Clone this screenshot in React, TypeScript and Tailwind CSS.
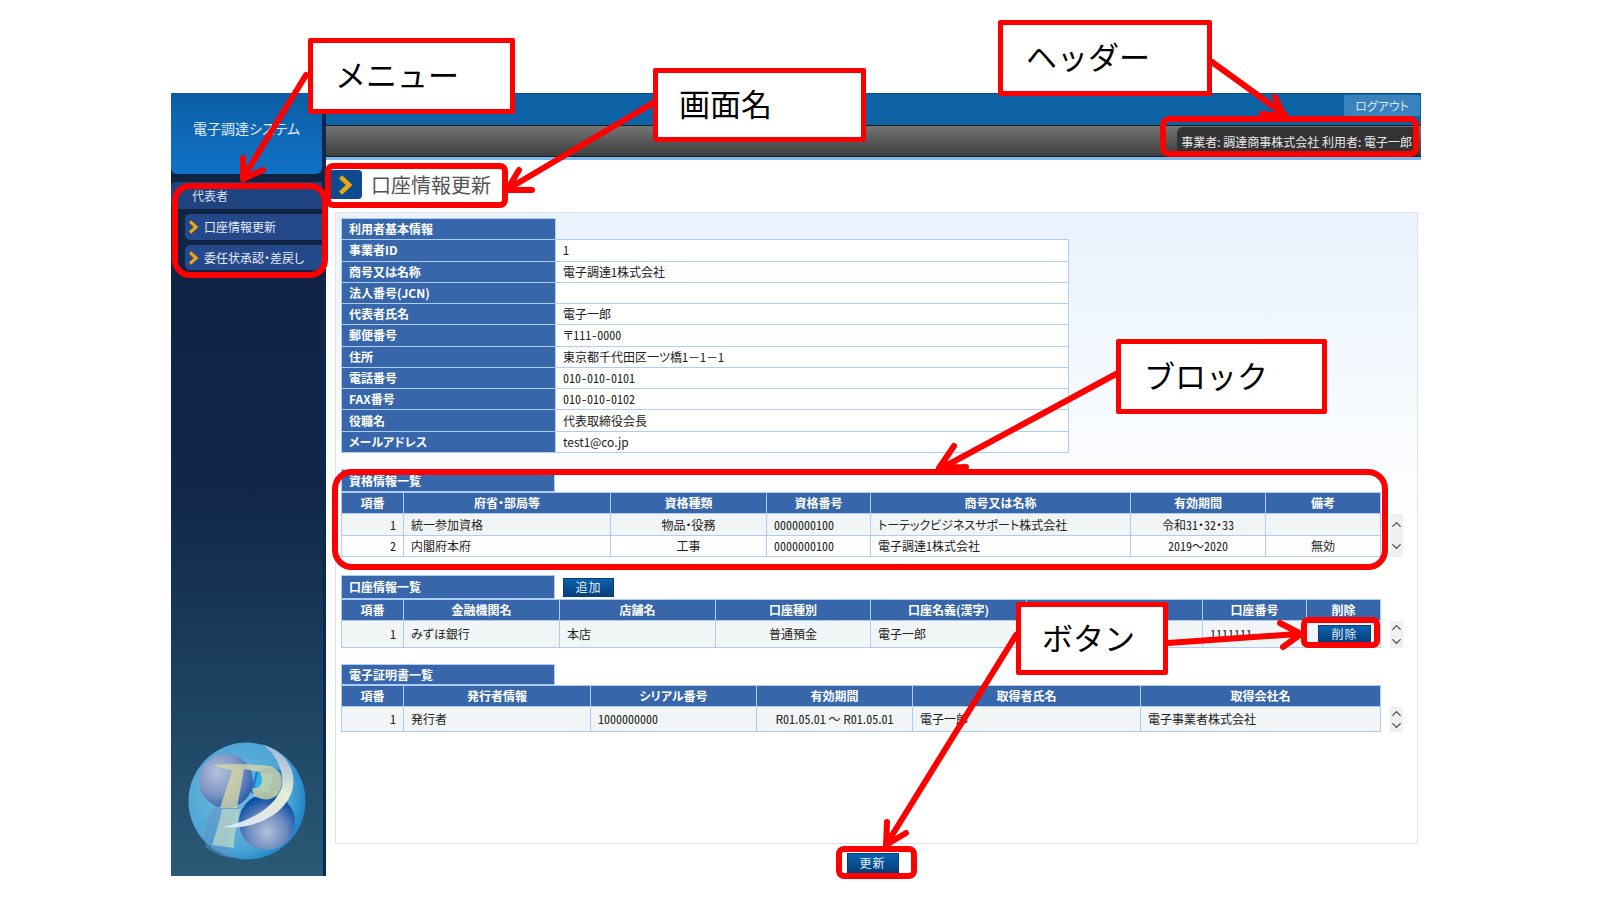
import { ChevronDown, ChevronUp } from "lucide-react";
import type { ReactNode } from "react";

const HEAD = "bg-[#3767aa] text-white font-bold";
const LINE = "border border-[#aecdf6]";

// half-width digits, like the bitmap gothic in the original system
function T({ s }: { s: string }) {
  return (
    <>
      {s.split(/([0-9-]+)/).map((part, i) =>
        i % 2 === 1 ? (
          <span key={i} className="[font-feature-settings:'hwid']">
            {part}
          </span>
        ) : (
          part
        ),
      )}
    </>
  );
}

type Col = { label: string; width: number; align?: "left" | "center" | "right" };

function cellAlign(align?: string) {
  if (align === "center") return "text-center";
  if (align === "right") return "text-right pr-[7px]";
  return "text-left pl-[7px]";
}

function ListTable({
  cols,
  rows,
  headH,
  rowHs,
}: {
  cols: Col[];
  rows: ReactNode[][];
  headH: string;
  rowHs: string[];
}) {
  return (
    <table className="table-fixed border-collapse w-[1039px] text-[12px] leading-none text-[#222]">
      <colgroup>
        {cols.map((c, i) => (
          <col key={i} style={{ width: c.width }} />
        ))}
      </colgroup>
      <thead>
        <tr className={headH}>
          {cols.map((c, i) => (
            <th key={i} className={`${HEAD} ${LINE} text-center`}>
              {c.label}
            </th>
          ))}
        </tr>
      </thead>
      <tbody>
        {rows.map((r, i) => (
          <tr key={i} className={`${rowHs[i]} ${i % 2 === 0 ? "bg-[#f1f5f5]" : "bg-white"}`}>
            {r.map((v, j) => (
              <td key={j} className={`${LINE} ${cellAlign(cols[j].align)}`}>
                {typeof v === "string" ? <T s={v} /> : v}
              </td>
            ))}
          </tr>
        ))}
      </tbody>
    </table>
  );
}

function SectionHead({ children, h }: { children: ReactNode; h: string }) {
  return (
    <div className={`${HEAD} ${LINE} ${h} w-[214px] pl-[7px] flex items-center text-[12px] leading-none`}>
      {children}
    </div>
  );
}

function Scroller({ h }: { h: string }) {
  return (
    <div className={`${h} w-[13px] ml-[9px] bg-[#f0f0f0] flex flex-col items-center justify-around text-[#4a4a4a]`}>
      <ChevronUp size={15} strokeWidth={2} className="-my-[2px]" />
      <ChevronDown size={15} strokeWidth={2} className="-my-[2px]" />
    </div>
  );
}

function BlueButton({ label, className }: { label: string; className: string }) {
  return (
    <button
      className={`${className} bg-gradient-to-b from-[#0b62ac] to-[#073f7c] border border-[#0a3c75] text-[#e4eefa] text-[12px] leading-none tracking-[1px] flex items-center justify-center`}
    >
      {label}
    </button>
  );
}

function Chevron({ className }: { className: string }) {
  return (
    <svg viewBox="0 0 12 16" className={className}>
      <path d="M2 1.5 L9 8 L2 14.5" fill="none" stroke="#eba70f" strokeWidth="3.6" />
    </svg>
  );
}

function Logo() {
  return (
    <svg viewBox="0 0 118 118" className="w-[118px] h-[118px]">
      <defs>
        <radialGradient id="globe" cx="40%" cy="45%" r="65%">
          <stop offset="0%" stopColor="#78bcdc" />
          <stop offset="72%" stopColor="#4da4d6" />
          <stop offset="100%" stopColor="#0f7cc4" />
        </radialGradient>
        <radialGradient id="ball" cx="35%" cy="35%" r="75%">
          <stop offset="0%" stopColor="#b4c2da" />
          <stop offset="55%" stopColor="#7d93c2" />
          <stop offset="100%" stopColor="#1d55a8" />
        </radialGradient>
        <radialGradient id="ballB" cx="50%" cy="68%" r="62%">
          <stop offset="0%" stopColor="#b5c1da" />
          <stop offset="55%" stopColor="#6e8ac0" />
          <stop offset="100%" stopColor="#0a4ea4" />
        </radialGradient>
        <linearGradient id="moon" x1="0.7" y1="0" x2="0.3" y2="1">
          <stop offset="0%" stopColor="#a9b8dc" />
          <stop offset="45%" stopColor="#f4f6d6" />
          <stop offset="100%" stopColor="#e4ecf8" />
        </linearGradient>
      </defs>
      <circle cx="59" cy="59" r="58.5" fill="url(#globe)" />
      <path d="M30 62 C18 72 14 92 18 106 C28 112 36 115 42 116 C40 96 42 78 52 66 Z" fill="#5f8fc8" opacity="0.5" />
      <circle cx="38" cy="39" r="27" fill="url(#ball)" />
      <circle cx="79" cy="80" r="28" fill="url(#ballB)" />
      <path d="M82 25 L100 30 L94 52 L72 56 L62 50 L68 30 Z" fill="#0f5fb4" opacity="0.7" />
      <path d="M70 30 L86 32 L80 50 L66 48 Z" fill="#2fb0ec" />
      <path d="M25 23 C42 22 68 22 82 24 C94 28 96 38 92 48 C88 58 78 60 66 54 L64 46 C74 48 76 38 72 30 L56 27 L49 66 L32 66 L44 29 C38 26 30 26 25 23 Z" fill="#d8d8a6" opacity="0.78" />
      <path d="M34 67 L52 67 C50 80 46 92 46 106 L24 103 C28 90 32 78 34 67 Z" fill="#cfe6c4" opacity="0.6" />
      <path d="M75 3 C95 8 108 25 105 45 C100 70 70 88 35 85 C60 80 88 66 94 44 C96 28 88 12 75 3 Z" fill="url(#moon)" opacity="0.92" />
    </svg>
  );
}

function Callout({ label, className, textPad }: { label: string; className: string; textPad: string }) {
  return (
    <div
      className={`absolute ${className} ${textPad} pb-[5px] bg-white border-[5px] border-[#ff0000] rounded-[2px] flex items-center text-[31px] leading-none text-black [font-feature-settings:normal]`}
    >
      {label}
    </div>
  );
}

function Ring({ className }: { className: string }) {
  return <div className={`absolute ${className} border-[6px] border-[#ff0000] pointer-events-none`} />;
}

const arrows = [
  "M306 75 L243 178 M243 158 L243 179 L263 170",
  "M653 103 L508 189 M519 170 L507 190 L532 190",
  "M1212 62 L1285 115 M1275 97 L1284 116 L1262 114",
  "M1116 374 L940 469 M954 446 L939 468 L966 467",
  "M1168 643 L1298 634 M1280 623 L1301 634 L1283 647",
  "M1016 635 L886 845 M887 822 L886 845 L906 833",
];

const basicInfo = [
  ["事業者ID", "1"],
  ["商号又は名称", "電子調達1株式会社"],
  ["法人番号(JCN)", ""],
  ["代表者氏名", "電子一郎"],
  ["郵便番号", "〒111-0000"],
  ["住所", "東京都千代田区一ツ橋1－1－1"],
  ["電話番号", "010-010-0101"],
  ["FAX番号", "010-010-0102"],
  ["役職名", "代表取締役会長"],
  ["メールアドレス", "test1@co.jp"],
];

export default function App() {
  return (
    <div className="relative w-[1600px] h-[900px] bg-white overflow-hidden pl-[171px] pt-[93px] font-['Noto_Sans_CJK_JP',sans-serif] [font-feature-settings:'palt']">
      <div className="flex w-[1250px] h-[783px]">
        {/* Sidebar */}
        <aside className="w-[155px] shrink-0 flex flex-col bg-gradient-to-b from-[#0f2240] via-[#10264a] to-[#2a5a76] border-r-[3px] border-[#0b2a50]">
          <div className="h-[81px] w-[151px] bg-gradient-to-b from-[#0c5ea6] to-[#1072c6] rounded-b-[6px] pt-[26px] text-center text-[14px] leading-[18px] text-[#e2ecf6]">
            電子調達システム
          </div>
          <div className="mt-[8px] h-[27px] w-[151px] bg-[#20447f] rounded-l-[5px] flex items-center pl-[21px] text-[12px] leading-none text-[#d5e0ee]">
            代表者
          </div>
          <div className="mt-[5px] ml-[14px] w-[137px] h-[26px] bg-[#24488a] rounded-l-[5px] flex items-center pl-[3px] text-[12px] leading-none text-[#e4ebf5]">
            <Chevron className="w-[11px] h-[14px] mr-[5px]" />
            口座情報更新
          </div>
          <div className="mt-[5px] ml-[14px] w-[137px] h-[25px] bg-[#24488a] rounded-l-[5px] flex items-center pl-[3px] text-[12px] leading-none text-[#e4ebf5]">
            <Chevron className="w-[11px] h-[14px] mr-[5px]" />
            委任状承認・差戻し
          </div>
          <div className="mt-auto pb-[16px] pl-[17px]">
            <Logo />
          </div>
        </aside>

        {/* Main column */}
        <main className="flex-1 min-w-0 flex flex-col">
          <header className="h-[67px] shrink-0">
            <div className="h-[32px] bg-[#0e62a6] border-t border-[#0a4c8a] flex justify-end items-start pt-[1px] pr-[1px]">
              <div className="w-[76px] h-[21px] bg-[#3a82bc] rounded-[2px] flex items-center justify-center text-[12px] leading-none text-[#d6e6f4]">
                ログアウト
              </div>
            </div>
            <div className="h-[32px] bg-gradient-to-b from-[#757575] to-[#3e3e3e] border-y border-[#1d1d1d] flex justify-end items-end pr-[2px]">
              <div className="w-[242px] h-[29px] bg-[#333] rounded-tl-[6px] flex items-center justify-end pr-[7px] text-[12px] leading-none text-[#e8e8e8] whitespace-nowrap">
                事業者:&nbsp;調達商事株式会社&nbsp;利用者:&nbsp;電子一郎
              </div>
            </div>
            <div className="h-[3px] bg-[#7ab8f0]" />
          </header>

          <div className="mt-[10px] ml-[3px] h-[29px] flex items-center shrink-0">
            <div className="w-[33px] h-[29px] bg-[#0d4a90] rounded-[4px] flex items-center justify-center">
              <Chevron className="w-[15px] h-[20px]" />
            </div>
            <span className="ml-[9px] text-[20px] leading-none text-[#555]">口座情報更新</span>
          </div>

          <section className="mt-[13px] ml-[9px] mr-[3px] h-[632px] shrink-0 border border-[#e3e3e3] bg-gradient-to-b from-[#e9f2fd] via-white to-white pl-[5px] pt-[5px] flex flex-col">
            {/* 利用者基本情報 */}
            <table className="table-fixed border-collapse w-[728px] h-[235px] text-[12px] leading-none text-[#222]">
              <colgroup>
                <col className="w-[214px]" />
                <col />
              </colgroup>
              <tbody>
                <tr>
                  <th className={`${HEAD} ${LINE} text-left pl-[7px]`}>利用者基本情報</th>
                </tr>
                {basicInfo.map(([k, v]) => (
                  <tr key={k}>
                    <th className={`${HEAD} ${LINE} text-left pl-[7px]`}>
                      <T s={k} />
                    </th>
                    <td className={`${LINE} bg-white pl-[7px]`}>
                      <T s={v} />
                    </td>
                  </tr>
                ))}
              </tbody>
            </table>

            {/* 資格情報一覧 */}
            <div className="mt-[16px]">
              <SectionHead h="h-[23px]">資格情報一覧</SectionHead>
              <div className="flex items-end">
                <ListTable
                  headH="h-[21px]"
                  rowHs={["h-[22px]", "h-[21px]"]}
                  cols={[
                    { label: "項番", width: 62, align: "right" },
                    { label: "府省・部局等", width: 207 },
                    { label: "資格種類", width: 156, align: "center" },
                    { label: "資格番号", width: 104 },
                    { label: "商号又は名称", width: 260 },
                    { label: "有効期間", width: 135, align: "center" },
                    { label: "備考", width: 115, align: "center" },
                  ]}
                  rows={[
                    ["1", "統一参加資格", "物品・役務", "0000000100", "トーテックビジネスサポート株式会社", "令和31・32・33", ""],
                    ["2", "内閣府本府", "工事", "0000000100", "電子調達1株式会社", "2019～2020", "無効"],
                  ]}
                />
                <Scroller h="h-[43px]" />
              </div>
            </div>

            {/* 口座情報一覧 */}
            <div className="mt-[18px]">
              <div className="flex items-center">
                <SectionHead h="h-[24px]">口座情報一覧</SectionHead>
                <BlueButton label="追加" className="ml-[8px] w-[51px] h-[19px]" />
              </div>
              <div className="flex items-end">
                <ListTable
                  headH="h-[21px]"
                  rowHs={["h-[27px]"]}
                  cols={[
                    { label: "項番", width: 62, align: "right" },
                    { label: "金融機関名", width: 156 },
                    { label: "店舗名", width: 156 },
                    { label: "口座種別", width: 155, align: "center" },
                    { label: "口座名義(漢字)", width: 156 },
                    { label: "", width: 176 },
                    { label: "口座番号", width: 104 },
                    { label: "削除", width: 74, align: "center" },
                  ]}
                  rows={[
                    [
                      "1",
                      "みずほ銀行",
                      "本店",
                      "普通預金",
                      "電子一郎",
                      "",
                      "1111111",
                      <div key="del" className="flex justify-end pr-[9px]">
                        <BlueButton label="削除" className="w-[53px] h-[18px]" />
                      </div>,
                    ],
                  ]}
                />
                <Scroller h="h-[27px]" />
              </div>
            </div>

            {/* 電子証明書一覧 */}
            <div className="mt-[16px]">
              <SectionHead h="h-[21px]">電子証明書一覧</SectionHead>
              <div className="flex items-end">
                <ListTable
                  headH="h-[21px]"
                  rowHs={["h-[25px]"]}
                  cols={[
                    { label: "項番", width: 62, align: "right" },
                    { label: "発行者情報", width: 187 },
                    { label: "シリアル番号", width: 166 },
                    { label: "有効期間", width: 156, align: "center" },
                    { label: "取得者氏名", width: 228 },
                    { label: "取得会社名", width: 240 },
                  ]}
                  rows={[["1", "発行者", "1000000000", "R01.05.01 ～ R01.05.01", "電子一郎", "電子事業者株式会社"]]}
                />
                <Scroller h="h-[25px]" />
              </div>
            </div>
          </section>

          <div className="mt-[9px] flex justify-center pl-[10px]">
            <div className="w-[64px]">
              <BlueButton label="更新" className="w-[52px] h-[20px]" />
            </div>
          </div>
        </main>
      </div>

      {/* Annotations over the screenshot */}
      <svg viewBox="0 0 1600 900" className="absolute inset-0 w-[1600px] h-[900px] pointer-events-none">
        {arrows.map((d) => (
          <path key={d} d={d} fill="none" stroke="#ff0000" strokeWidth="6" strokeLinecap="round" strokeLinejoin="round" />
        ))}
      </svg>
      <Ring className="left-[172px] top-[183px] w-[156px] h-[95px] rounded-[18px]" />
      <Ring className="left-[325px] top-[163px] w-[183px] h-[45px] rounded-[8px]" />
      <Ring className="left-[1160px] top-[116px] w-[259px] h-[41px] rounded-[9px]" />
      <Ring className="left-[332px] top-[469px] w-[1056px] h-[101px] rounded-[20px]" />
      <Ring className="left-[1301px] top-[617px] w-[79px] h-[31px] rounded-[7px]" />
      <Ring className="left-[836px] top-[846px] w-[81px] h-[33px] rounded-[8px]" />
      <Callout label="メニュー" className="left-[308px] top-[38px] w-[207px] h-[76px]" textPad="pl-[22px]" />
      <Callout label="画面名" className="left-[653px] top-[68px] w-[213px] h-[74px]" textPad="pl-[21px]" />
      <Callout label="ヘッダー" className="left-[998px] top-[20px] w-[214px] h-[76px]" textPad="pl-[23px]" />
      <Callout label="ブロック" className="left-[1116px] top-[339px] w-[211px] h-[75px]" textPad="pl-[23px]" />
      <Callout label="ボタン" className="left-[1016px] top-[602px] w-[152px] h-[73px]" textPad="pl-[21px]" />
    </div>
  );
}
